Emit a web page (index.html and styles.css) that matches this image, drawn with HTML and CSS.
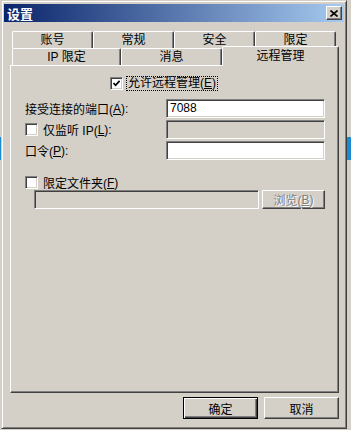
FILE: index.html
```html
<!DOCTYPE html>
<html lang="zh-CN">
<head>
  <meta charset="UTF-8" />
  <title>设置</title>
  <link rel="stylesheet" href="styles.css">
</head>
<body>
  <div class="window">
    <div class="titlebar">
      <span class="title">设置</span>
      <span class="close">
        <svg width="8" height="7" viewBox="0 0 8 7"><path d="M0.5 0.5L7.5 6.5M7.5 0.5L0.5 6.5" stroke="#000" stroke-width="1.6"/></svg>
      </span>
    </div>

    <div class="dialog">
      <div class="tabs">
        <div class="tab-row">
          <div class="tab">账号</div>
          <div class="tab">常规</div>
          <div class="tab">安全</div>
          <div class="tab">限定</div>
        </div>
        <div class="tab-row">
          <div class="tab tab-ip">IP 限定</div>
          <div class="tab tab-msg">消息</div>
          <div class="tab active">远程管理</div>
        </div>
      </div>

      <div class="panel">
        <div class="allow">
          <span class="check checked">
            <svg width="7" height="7" viewBox="0 0 7 7"><path d="M0.5 3L2.6 5.3L6.6 0.8" fill="none" stroke="#000" stroke-width="1.7"/></svg>
          </span>
          <span class="focus">允许远程管理(<u>E</u>)</span>
        </div>

        <div class="form">
          <div class="label">接受连接的端口(<u>A</u>):</div>
          <div class="field">7088</div>

          <div class="label"><span class="check"></span>仅监听 IP(<u>L</u>):</div>
          <div class="field disabled"></div>

          <div class="label">口令(<u>P</u>):</div>
          <div class="field"></div>
        </div>

        <div class="folder label"><span class="check"></span>限定文件夹(<u>F</u>)</div>
        <div class="folder-row">
          <div class="field disabled path"></div>
          <div class="btn btn-off">浏览(<u>B</u>)</div>
        </div>
      </div>

      <div class="actions">
        <div class="btn default">确定</div>
        <div class="btn">取消</div>
      </div>
    </div>
  </div>
</body>
</html>
```

FILE: styles.css
```css
body {
  margin: 0;
  background: linear-gradient(to bottom, #d4d0c8 0, #d4d0c8 137px, #1c8ad0 137px, #1c8ad0 160px, #d4d0c8 160px);
  font-family: "Liberation Sans", "Noto Sans CJK SC", sans-serif;
  font-size: 12px;
  color: #000;
}

.window {
  width: 346px;
  height: 429px;
  margin-left: 1px;
  box-sizing: border-box;
  padding: 2px;
  background: #d4d0c8;
  border: 1px solid;
  border-color: #d4d0c8 #404040 #404040 #d4d0c8;
  box-shadow: inset 1px 1px #fff, inset -1px -1px #808080;
  display: flex;
  flex-direction: column;
}

.titlebar {
  height: 18px;
  margin-top: 1px;
  padding: 0 2px 0 3px;
  background: linear-gradient(to right, #0a246a, #a6caf0);
  display: flex;
  align-items: center;
  justify-content: space-between;
}

.title {
  color: #fff;
  font-weight: bold;
  font-size: 13px;
}

.close {
  width: 16px;
  height: 14px;
  box-sizing: border-box;
  background: #d4d0c8;
  border: 1px solid;
  border-color: #fff #404040 #404040 #fff;
  box-shadow: inset -1px -1px #808080;
  display: flex;
  align-items: center;
  justify-content: center;
}

.dialog {
  padding: 9px 5px 0 6px;
  display: flex;
  flex-direction: column;
}

/* tabs */
.tabs {
  padding-left: 2px;
}

.tab-row {
  display: flex;
  height: 17px;
}

.tab {
  width: 81px;
  height: 17px;
  box-sizing: border-box;
  background: #d4d0c8;
  border-top: 1px solid #fff;
  border-left: 1px solid #fff;
  border-right: 1px solid #404040;
  box-shadow: inset -1px 0 #808080;
  border-radius: 2px 2px 0 0;
  text-align: center;
  line-height: 16px;
}

.tab-ip { width: 109px; }
.tab-msg { width: 101px; }

.tab.active {
  width: 117px;
  height: 20px;
  margin-top: -2px;
  margin-left: 0;
  line-height: 18px;
  position: relative;
  z-index: 1;
}

/* panel */
.panel {
  height: 328px;
  box-sizing: border-box;
  border: 1px solid;
  border-color: #fff #404040 #404040 #fff;
  box-shadow: inset -1px -1px #808080;
}

.check {
  width: 13px;
  height: 13px;
  box-sizing: border-box;
  flex: none;
  background: #fff;
  border: 1px solid;
  border-color: #808080 #fff #fff #808080;
  box-shadow: inset 1px 1px #404040, inset -1px -1px #d4d0c8;
  display: inline-flex;
  align-items: center;
  justify-content: center;
  margin-right: 5px;
}

.allow {
  margin-top: 11px;
  padding-left: 99px;
  height: 13px;
  display: flex;
  align-items: center;
}

.allow .check {
  margin-right: 4px;
}

.focus {
  outline: 1px dotted #000;
  padding: 0 1px;
  line-height: 13px;
}

.form {
  margin-top: 9px;
  padding-left: 14px;
  display: grid;
  grid-template-columns: 141px 159px;
  grid-auto-rows: 19px;
  row-gap: 2px;
}

.label {
  display: flex;
  align-items: center;
  white-space: nowrap;
}

.field {
  box-sizing: border-box;
  height: 19px;
  background: #fff;
  border: 1px solid;
  border-color: #808080 #fff #fff #808080;
  box-shadow: inset 1px 1px #404040, inset -1px -1px #d4d0c8;
  padding: 0 3px;
  line-height: 17px;
}

.field.disabled {
  background: #d4d0c8;
}

.folder {
  margin-top: 16px;
  padding-left: 14px;
  height: 13px;
}

.folder-row {
  margin-top: 1px;
  padding-left: 23px;
  display: flex;
  gap: 3px;
}

.path {
  width: 225px;
}

/* buttons */
.btn {
  width: 75px;
  height: 22px;
  box-sizing: border-box;
  background: #d4d0c8;
  border: 1px solid;
  border-color: #fff #404040 #404040 #fff;
  box-shadow: inset -1px -1px #808080;
  display: flex;
  align-items: center;
  justify-content: center;
}

.btn-off {
  width: 63px;
  height: 19px;
  color: #808080;
  text-shadow: 1px 1px #fff;
}

.btn.default {
  border: 1px solid #000;
  box-shadow: inset 1px 1px #fff, inset -1px -1px #404040, inset -2px -2px #808080;
}

.actions {
  margin-top: 4px;
  display: flex;
  justify-content: flex-end;
  gap: 6px;
}
```
